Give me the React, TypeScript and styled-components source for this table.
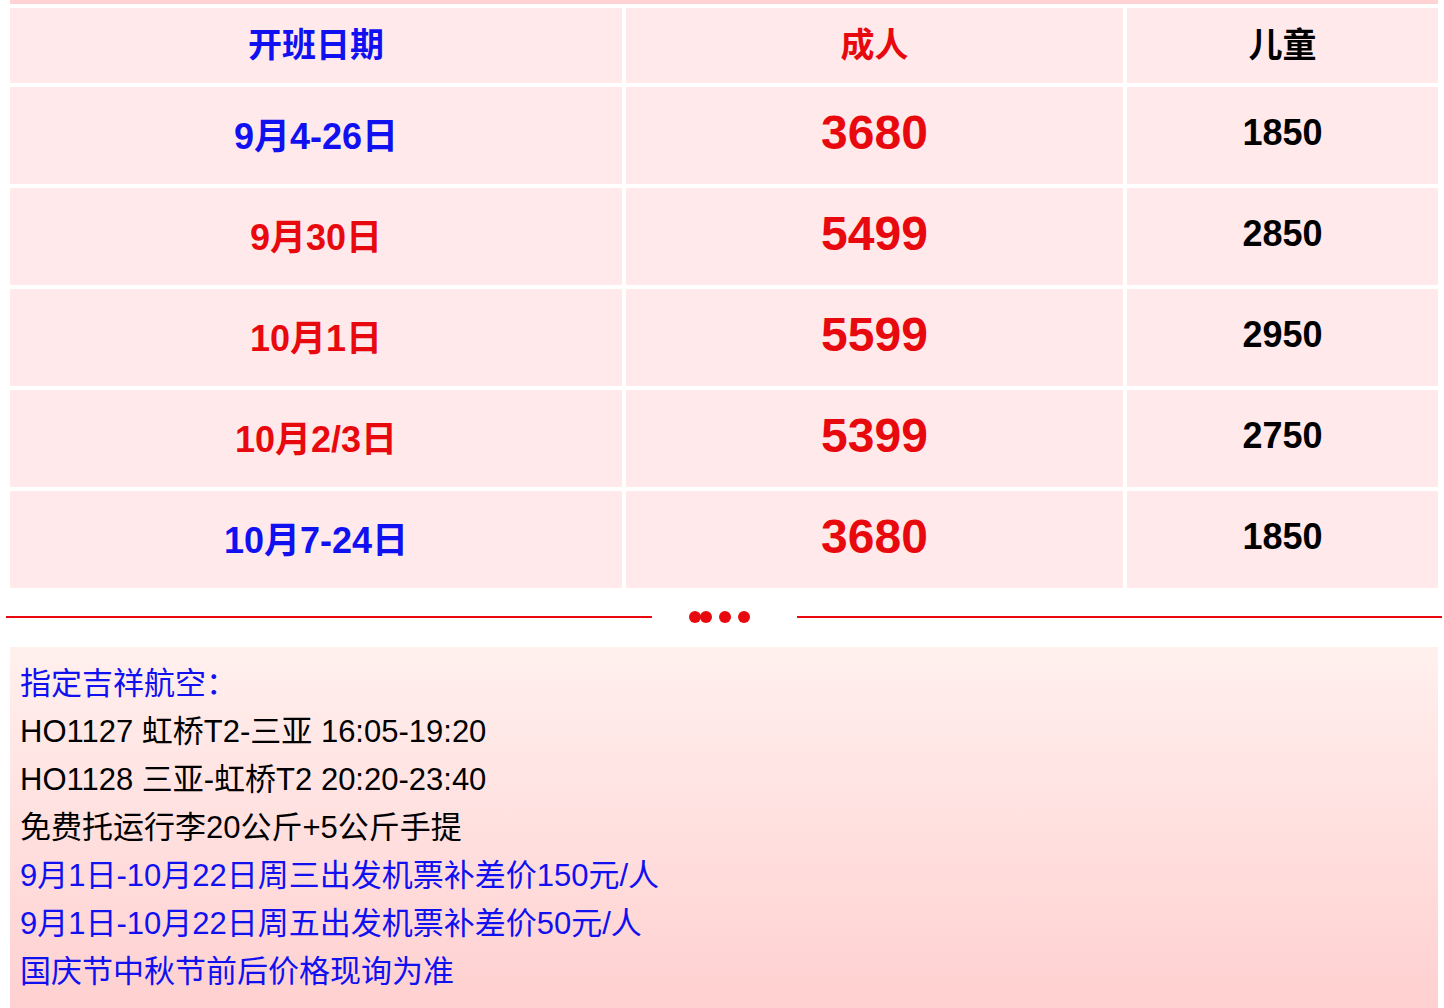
import * as React from "react";
import styled, { createGlobalStyle } from "styled-components";

const GlobalStyle = createGlobalStyle`
  html, body {
    margin: 0;
    padding: 0;
    background: #ffffff;
  }
  body {
    font-family: "Liberation Sans", "Noto Sans CJK SC", sans-serif;
  }
`;

const colors = {
  blue: "#1010f0",
  red: "#e8090f",
  black: "#000000",
  cell: "#ffe9eb",
  strip: "#ffd3d3"
};

type Tone = "blue" | "red" | "black";

interface IRow {
  date: string;
  dateTone: Tone;
  adult: string;
  child: string;
}

const rows: IRow[] = [
  { date: "9月4-26日", dateTone: "blue", adult: "3680", child: "1850" },
  { date: "9月30日", dateTone: "red", adult: "5499", child: "2850" },
  { date: "10月1日", dateTone: "red", adult: "5599", child: "2950" },
  { date: "10月2/3日", dateTone: "red", adult: "5399", child: "2750" },
  { date: "10月7-24日", dateTone: "blue", adult: "3680", child: "1850" }
];

const notes: { text: string; tone: Tone }[] = [
  { text: "指定吉祥航空：", tone: "blue" },
  { text: "HO1127 虹桥T2-三亚 16:05-19:20", tone: "black" },
  { text: "HO1128 三亚-虹桥T2 20:20-23:40", tone: "black" },
  { text: "免费托运行李20公斤+5公斤手提", tone: "black" },
  { text: "9月1日-10月22日周三出发机票补差价150元/人", tone: "blue" },
  { text: "9月1日-10月22日周五出发机票补差价50元/人", tone: "blue" },
  { text: "国庆节中秋节前后价格现询为准", tone: "blue" }
];

const DotsIcon = () => (
  <svg width="145" height="14" viewBox="0 0 145 14">
    <circle cx="43" cy="7" r="6" fill={colors.red} />
    <circle cx="54" cy="7" r="6" fill={colors.red} />
    <circle cx="73" cy="7" r="6" fill={colors.red} />
    <circle cx="92" cy="7" r="6" fill={colors.red} />
  </svg>
);

export default function App() {
  return (
    <>
      <GlobalStyle />
      <Page>
        <TopStrip />
        <PriceGrid>
          <HeadCell tone="blue">开班日期</HeadCell>
          <HeadCell tone="red">成人</HeadCell>
          <HeadCell tone="black">儿童</HeadCell>
          {rows.map((row, i) => (
            <React.Fragment key={i}>
              <BodyCell tone={row.dateTone} size={36}>
                {row.date}
              </BodyCell>
              <BodyCell tone="red" size={48}>
                {row.adult}
              </BodyCell>
              <BodyCell tone="black" size={36}>
                {row.child}
              </BodyCell>
            </React.Fragment>
          ))}
        </PriceGrid>
        <Divider>
          <Line />
          <DotsIcon />
          <Line />
        </Divider>
        <NotesBox>
          {notes.map((n, i) => (
            <NoteLine key={i} tone={n.tone}>
              {n.text}
            </NoteLine>
          ))}
        </NotesBox>
      </Page>
    </>
  );
}

// css
const Page = styled.div`
  width: 1444px;
  height: 1008px;
  overflow: hidden;
  box-sizing: border-box;
  padding: 0 2px 0 6px;
  display: flex;
  flex-direction: column;
`;

const TopStrip = styled.div`
  height: 4px;
  margin: 0 4px;
  background: ${colors.strip};
`;

const PriceGrid = styled.div`
  display: grid;
  grid-template-columns: 612px 497px 311px;
  grid-template-rows: 75px repeat(5, 97px);
  gap: 4px;
  padding: 4px;
`;

const Cell = styled.div<{ tone: Tone }>`
  background: ${colors.cell};
  display: flex;
  align-items: center;
  justify-content: center;
  font-weight: bold;
  color: ${(p) => colors[p.tone]};
  white-space: nowrap;
  padding-bottom: 6px;
  box-sizing: border-box;
`;

const HeadCell = styled(Cell)`
  font-size: 34px;
`;

const BodyCell = styled(Cell)<{ size: number }>`
  font-size: ${(p) => p.size}px;
`;

const Divider = styled.div`
  display: flex;
  align-items: center;
  margin-top: 18px;
  height: 14px;
`;

const Line = styled.div`
  flex: 1;
  height: 2px;
  background: ${colors.red};
`;

const NotesBox = styled.div`
  flex: 1;
  margin: 23px 4px 0;
  padding: 13px 10px 0;
  background: linear-gradient(to bottom, #fff0ee 0%, #ffd0d0 100%);
`;

const NoteLine = styled.div<{ tone: Tone }>`
  font-size: 31px;
  line-height: 48px;
  color: ${(p) => colors[p.tone]};
  white-space: nowrap;
`;
